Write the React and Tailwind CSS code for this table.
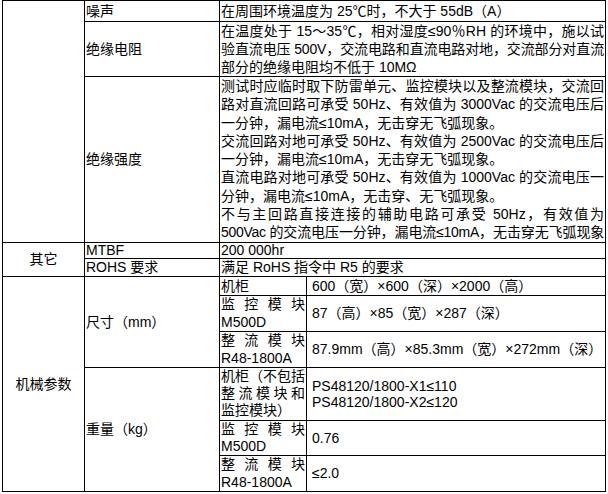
import React from "react";

// one justified line of a paragraph (last line of a block stays left unless asked)
const L = ({ children, j = true, className = "" }) => (
  <div className={`${j ? "text-justify [text-align-last:justify]" : ""} ${className}`}>{children}</div>
);

const Cell = ({ className = "", children }) => (
  <div className={`bg-white overflow-hidden ${className}`}>{children}</div>
);

export default function App() {
  return (
    <div className="w-[608px] h-[494px] bg-white text-black text-[14px] font-['Liberation_Sans','Noto_Sans_CJK_SC',sans-serif]">
      <div className="ml-[2px] w-[604px] grid grid-cols-[81px_134px_86px_298px] grid-rows-[20px_54px_165px_15px_17px_18px_35px_35px_52px_34px_35px] gap-px p-px bg-black">
        {/* first group, continues from above */}
        <Cell className="col-start-1 row-start-1 row-span-3" />
        <Cell className="col-start-2 row-start-1 pl-px leading-[20px]">噪声</Cell>
        <Cell className="col-start-3 col-span-2 row-start-1 pl-px leading-[20px]">
          在周围环境温度为 25℃时，不大于 55dB（A）
        </Cell>

        <Cell className="col-start-2 row-start-2 pl-px flex items-center">绝缘电阻</Cell>
        <Cell className="col-start-3 col-span-2 row-start-2 px-px leading-[18px]">
          <L>在温度处于 15～35℃，相对湿度≤90％RH 的环境中，施以试</L>
          <L className="tracking-[-0.15px]">验直流电压 500V，交流电路和直流电路对地，交流部分对直流</L>
          <L j={false}>部分的绝缘电阻均不低于 10MΩ</L>
        </Cell>

        <Cell className="col-start-2 row-start-3 pl-px flex items-center">绝缘强度</Cell>
        <Cell className="col-start-3 col-span-2 row-start-3 px-px leading-[18.3px]">
          <L>测试时应临时取下防雷单元、监控模块以及整流模块，交流回</L>
          <L>路对直流回路可承受 50Hz、有效值为 3000Vac 的交流电压后</L>
          <L j={false}>一分钟，漏电流≤10mA，无击穿无飞弧现象。</L>
          <L>交流回路对地可承受 50Hz、有效值为 2500Vac 的交流电压后</L>
          <L j={false}>一分钟，漏电流≤10mA，无击穿无飞弧现象。</L>
          <L>直流电路对地可承受 50Hz、有效值为 1000Vac 的交流电压一</L>
          <L j={false}>分钟，漏电流≤10mA，无击穿、无飞弧现象。</L>
          <L>不与主回路直接连接的辅助电路可承受 50Hz，有效值为</L>
          <L className="tracking-[-0.3px]">500Vac 的交流电压一分钟，漏电流≤10mA，无击穿无飞弧现象</L>
        </Cell>

        {/* 其它 */}
        <Cell className="col-start-1 row-start-4 row-span-2 flex items-center justify-center">其它</Cell>
        <Cell className="col-start-2 row-start-4 pl-px leading-[15px]">MTBF</Cell>
        <Cell className="col-start-3 col-span-2 row-start-4 pl-px leading-[15px]">200 000hr</Cell>
        <Cell className="col-start-2 row-start-5 pl-px leading-[17px]">ROHS 要求</Cell>
        <Cell className="col-start-3 col-span-2 row-start-5 pl-px leading-[17px]">满足 RoHS 指令中 R5 的要求</Cell>

        {/* 机械参数 */}
        <Cell className="col-start-1 row-start-6 row-span-6 flex items-center justify-center">机械参数</Cell>

        <Cell className="col-start-2 row-start-6 row-span-3 pl-px flex items-center">尺寸（mm）</Cell>
        <Cell className="col-start-3 row-start-6 pl-px leading-[18px]">机柜</Cell>
        <Cell className="col-start-4 row-start-6 pl-[5px] flex items-center">600（宽）×600（深）×2000（高）</Cell>
        <Cell className="col-start-3 row-start-7 px-px leading-[17.5px]">
          <L>监控模块</L>
          <L j={false}>M500D</L>
        </Cell>
        <Cell className="col-start-4 row-start-7 pl-[5px] flex items-center">87（高）×85（宽）×287（深）</Cell>
        <Cell className="col-start-3 row-start-8 px-px leading-[17.5px]">
          <L>整流模块</L>
          <L j={false}>R48-1800A</L>
        </Cell>
        <Cell className="col-start-4 row-start-8 pl-[5px] flex items-center">87.9mm（高）×85.3mm（宽）×272mm（深）</Cell>

        <Cell className="col-start-2 row-start-9 row-span-3 pl-px flex items-center">重量（kg）</Cell>
        <Cell className="col-start-3 row-start-9 px-px leading-[17px]">
          <L>机柜（不包括</L>
          <L>整流模块和</L>
          <L j={false}>监控模块）</L>
        </Cell>
        <Cell className="col-start-4 row-start-9 pl-[5px] flex flex-col justify-center leading-[16px]">
          <div>PS48120/1800-X1≤110</div>
          <div>PS48120/1800-X2≤120</div>
        </Cell>
        <Cell className="col-start-3 row-start-10 px-px leading-[17px]">
          <L>监控模块</L>
          <L j={false}>M500D</L>
        </Cell>
        <Cell className="col-start-4 row-start-10 pl-[5px] flex items-center">0.76</Cell>
        <Cell className="col-start-3 row-start-11 px-px leading-[17.5px]">
          <L>整流模块</L>
          <L j={false}>R48-1800A</L>
        </Cell>
        <Cell className="col-start-4 row-start-11 pl-[5px] flex items-center">≤2.0</Cell>
      </div>
    </div>
  );
}
